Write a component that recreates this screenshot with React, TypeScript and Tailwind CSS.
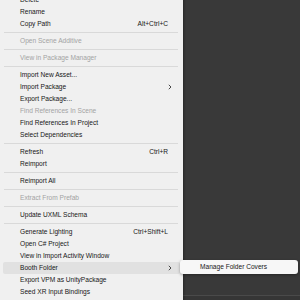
import React from "react";

type Item =
  | { type: "sep" }
  | { type: "item"; label: string; shortcut?: string; disabled?: boolean; sub?: boolean; active?: boolean };

const items: Item[] = [
  { type: "item", label: "Delete" },
  { type: "item", label: "Rename" },
  { type: "item", label: "Copy Path", shortcut: "Alt+Ctrl+C" },
  { type: "sep" },
  { type: "item", label: "Open Scene Additive", disabled: true },
  { type: "sep" },
  { type: "item", label: "View in Package Manager", disabled: true },
  { type: "sep" },
  { type: "item", label: "Import New Asset..." },
  { type: "item", label: "Import Package", sub: true },
  { type: "item", label: "Export Package..." },
  { type: "item", label: "Find References In Scene", disabled: true },
  { type: "item", label: "Find References In Project" },
  { type: "item", label: "Select Dependencies" },
  { type: "sep" },
  { type: "item", label: "Refresh", shortcut: "Ctrl+R" },
  { type: "item", label: "Reimport" },
  { type: "sep" },
  { type: "item", label: "Reimport All" },
  { type: "sep" },
  { type: "item", label: "Extract From Prefab", disabled: true },
  { type: "sep" },
  { type: "item", label: "Update UXML Schema" },
  { type: "sep" },
  { type: "item", label: "Generate Lighting", shortcut: "Ctrl+Shift+L" },
  { type: "item", label: "Open C# Project" },
  { type: "item", label: "View in Import Activity Window" },
  { type: "item", label: "Booth Folder", sub: true, active: true },
  { type: "item", label: "Export VPM as UnityPackage" },
  { type: "item", label: "Seed XR Input Bindings" },
];

function Chevron() {
  return (
    <svg width="4" height="6" viewBox="0 0 4 6" className="shrink-0">
      <path d="M0.8 0.8 L3 3 L0.8 5.2" fill="none" stroke="#333" strokeWidth="0.9" />
    </svg>
  );
}

export default function App() {
  return (
    <div
      className="relative w-[300px] h-[300px] overflow-hidden bg-[#393939] flex flex-col"
      style={{ fontFamily: '"Liberation Sans", Arial, sans-serif' }}
    >
      <div className="h-[295px] bg-[#393939]" />
      <div className="h-px bg-[#4a4a4a]" />
      <div className="flex-1 bg-[#363636]" />

      <div className="absolute left-0 top-[-6px] w-[183px] pb-[8px] bg-[#f0f0f0] flex flex-col shadow-[1px_0_2px_rgba(0,0,0,0.3)]">
        {items.map((it, i) =>
          it.type === "sep" ? (
            <div key={i} className="h-[5px] flex items-center pl-[4px] pr-[5px]">
              <div className="h-px w-full bg-[#d9d9d9]" />
            </div>
          ) : (
            <div
              key={i}
              className={
                "h-[12px] flex items-center text-[6.6px] leading-none mx-[3px] pl-[17px] pr-[8px] rounded-[2px] " +
                (it.active ? "bg-[#e1e1e1] " : "") +
                (it.disabled ? "text-[#a3a3a3]" : "text-[#171717]")
              }
            >
              <span className="flex-1 whitespace-nowrap">{it.label}</span>
              {it.shortcut && <span className="whitespace-nowrap mr-[4px]">{it.shortcut}</span>}
              {it.sub && <Chevron />}
            </div>
          )
        )}
      </div>

      <div className="absolute left-[180px] top-[260px] w-[118px] h-[14px] bg-[#f7f7f7] rounded-[3px] shadow-[0_1px_3px_rgba(0,0,0,0.35)] flex items-center pl-[20px]">
        <span className="text-[6.6px] leading-none text-[#171717] whitespace-nowrap">Manage Folder Covers</span>
      </div>
    </div>
  );
}
